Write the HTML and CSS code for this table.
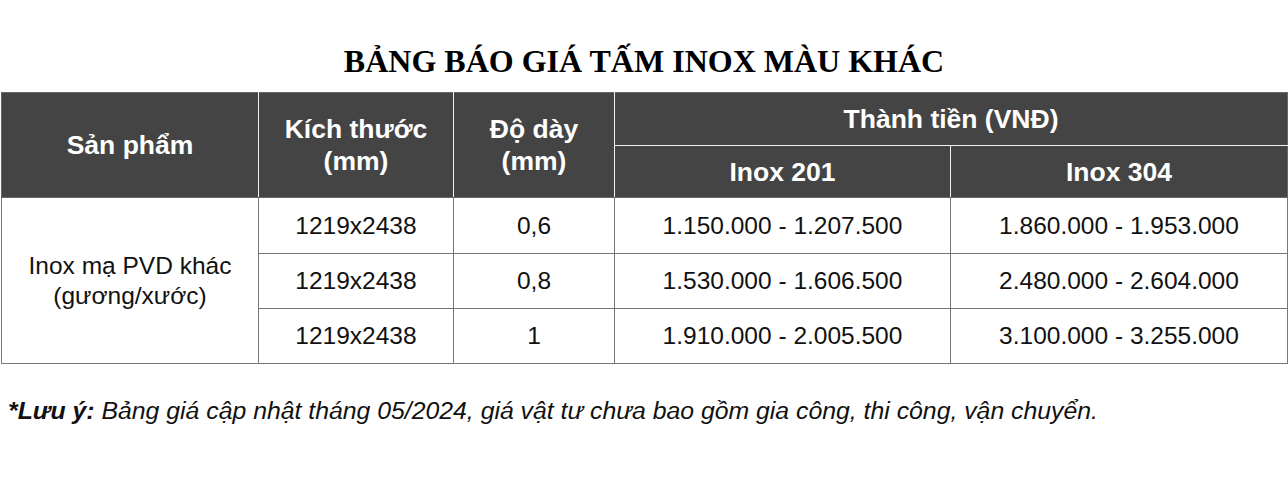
FILE: index.html
```html
<!DOCTYPE html>
<html lang="vi">
<head>
<meta charset="utf-8">
<link rel="stylesheet" href="styles.css">
</head>
<body>
<h1 class="title">BẢNG BÁO GIÁ TẤM INOX MÀU KHÁC</h1>
<table class="price">
  <colgroup>
    <col class="c1"><col class="c2"><col class="c3"><col class="c4"><col class="c5">
  </colgroup>
  <thead>
    <tr class="h1">
      <th rowspan="2">Sản phẩm</th>
      <th rowspan="2">Kích thước<br>(mm)</th>
      <th rowspan="2">Độ dày<br>(mm)</th>
      <th colspan="2">Thành tiền (VNĐ)</th>
    </tr>
    <tr class="h2">
      <th>Inox 201</th>
      <th>Inox 304</th>
    </tr>
  </thead>
  <tbody>
    <tr class="r1">
      <td rowspan="3">Inox mạ PVD khác<br>(gương/xước)</td>
      <td>1219x2438</td><td>0,6</td><td>1.150.000 - 1.207.500</td><td>1.860.000 - 1.953.000</td>
    </tr>
    <tr class="r2">
      <td>1219x2438</td><td>0,8</td><td>1.530.000 - 1.606.500</td><td>2.480.000 - 2.604.000</td>
    </tr>
    <tr class="r3">
      <td>1219x2438</td><td>1</td><td>1.910.000 - 2.005.500</td><td>3.100.000 - 3.255.000</td>
    </tr>
  </tbody>
</table>
<p class="note"><b>*Lưu ý:</b> Bảng giá cập nhật tháng 05/2024, giá vật tư chưa bao gồm gia công, thi công, vận chuyển.</p>
</body>
</html>
```
FILE: styles.css
```css
html, body {
  margin: 0;
  padding: 0;
  background: #ffffff;
}
body {
  font-family: "Liberation Sans", Arial, sans-serif;
  color: #111111;
}
.title {
  font-family: "Liberation Serif", "Times New Roman", serif;
  font-weight: bold;
  font-size: 32px;
  line-height: 36px;
  text-align: center;
  margin: 0;
  padding-top: 43px;
  height: 49px;
  color: #000000;
}
.price {
  border-collapse: collapse;
  table-layout: fixed;
  margin-left: 1px;
  width: 1286px;
  border: 1px solid #666666;
}
.c1 { width: 257px; }
.c2 { width: 195px; }
.c3 { width: 161px; }
.c4 { width: 336px; }
.c5 { width: 337px; }
.price th {
  background: #444444;
  color: #ffffff;
  font-weight: bold;
  font-size: 26.5px;
  line-height: 32px;
  text-align: center;
  vertical-align: middle;
  padding: 0;
  border: 1px solid #f2f2f2;
}
.price thead tr:first-child th { border-top-color: #666666; }
.price thead th:first-child { border-left-color: #666666; }
.price thead tr:first-child th:last-child { border-right-color: #666666; }
.price .h2 th:last-child { border-right-color: #666666; }
.price .h2 th { border-bottom-color: #666666; }
.price thead th[rowspan] { border-bottom-color: #666666; }
.h1 { height: 53px; }
.h2 { height: 52px; }
.price td {
  font-size: 24.5px;
  line-height: 30px;
  text-align: center;
  vertical-align: middle;
  padding: 0;
  border: 1px solid #777777;
  color: #111111;
}
.r1 { height: 56px; }
.r2 { height: 55px; }
.r3 { height: 55px; }
.note {
  margin: 0;
  padding-top: 33px;
  padding-left: 8px;
  font-size: 24.8px;
  line-height: 28px;
  font-style: italic;
  color: #111111;
}
.note b { font-weight: bold; }
```
